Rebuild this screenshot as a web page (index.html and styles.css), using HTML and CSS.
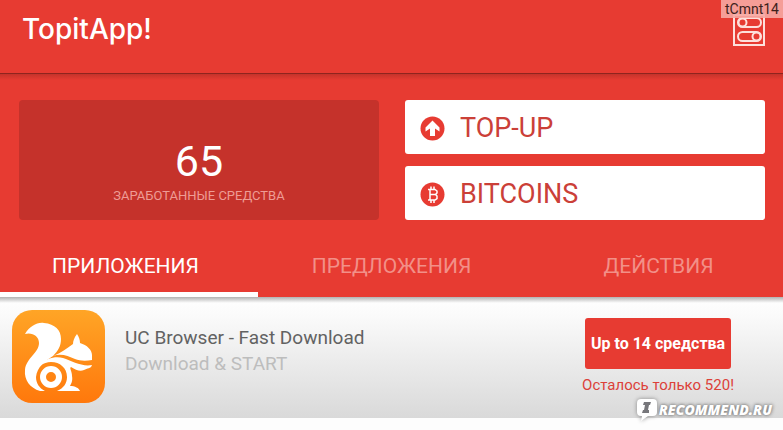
FILE: index.html
```html
<!DOCTYPE html>
<html lang="ru">
<head>
    <meta charset="UTF-8">
    <meta name="viewport" content="width=device-width, initial-scale=1.0">
    <title>TopitApp!</title>
    <link rel="stylesheet" href="styles.css">
</head>
<body>
    <header class="topbar">
        <h1>TopitApp!</h1>
        <button type="button" class="settings-btn" aria-label="Настройки">
            <svg width="32" height="32" viewBox="0 0 32 32" fill="none" stroke="#fde0dc" stroke-width="2">
                <rect x="1" y="1" width="30" height="30"/>
                <rect x="5" y="4" width="23" height="9" rx="4.5"/>
                <circle cx="9.5" cy="8.5" r="4"/>
                <rect x="5" y="18" width="23" height="9" rx="4.5"/>
                <circle cx="23.5" cy="22.5" r="4"/>
            </svg>
        </button>
        <span class="user-tag">tCmnt14</span>
    </header>

    <section class="summary">
        <div class="balance">
            <strong class="balance-value">65</strong>
            <span class="balance-label">ЗАРАБОТАННЫЕ СРЕДСТВА</span>
        </div>
        <div class="payouts">
            <button type="button" class="payout-btn">
                <svg width="25" height="25" viewBox="0 0 25 25">
                    <circle cx="12.5" cy="12.5" r="12" fill="#e73b32"/>
                    <path d="M12.5 4.5 L19.5 11.5 V15.5 L15 12.5 V20 H10 V12.5 L5.5 15.5 V11.5 Z" fill="#fff"/>
                </svg>
                TOP-UP
            </button>
            <button type="button" class="payout-btn">
                <svg width="25" height="25" viewBox="0 0 25 25">
                    <circle cx="12.5" cy="12.5" r="12" fill="#e73b32"/>
                    <path d="M8 7.5 H15 L17 9 V11 L15.5 12.5 L17 14 V16.5 L15 18 H8 M10 7.5 V18 M10 12.5 H15.5 M11 4.5 V7.5 M14 4.5 V7.5 M11 18 V21 M14 18 V21" fill="none" stroke="#fff" stroke-width="1.5"/>
                </svg>
                BITCOINS
            </button>
        </div>
    </section>

    <nav class="tabs">
        <a href="#apps" class="tab active">ПРИЛОЖЕНИЯ</a>
        <a href="#offers" class="tab">ПРЕДЛОЖЕНИЯ</a>
        <a href="#actions" class="tab">ДЕЙСТВИЯ</a>
    </nav>

    <main id="apps">
        <article class="app-row">
            <svg class="app-icon" width="93" height="93" viewBox="0 0 93 93">
                <defs>
                    <linearGradient id="orange" x1="0" y1="0" x2="0" y2="1">
                        <stop offset="0" stop-color="#ffa526"/>
                        <stop offset="1" stop-color="#ff780c"/>
                    </linearGradient>
                </defs>
                <rect width="93" height="93" rx="20" fill="url(#orange)"/>
                <!-- tail -->
                <path d="M13 24 C18 16 25 12 32 13 C43 14 49 20 49 29 C49 36 46 41 41 46 C33 51 25 57 24 67 C24 73 27 78 33 81 L28 81 C18 78 12 70 13 60 C14 48 27 43 27 33 C27 26 20 22 13 24 Z" fill="#fff"/>
                <!-- head -->
                <path d="M41 46 C49 43 55 38 61 34 C61 31 62 28 65 24 C67 27 68 30 68 33 C75 35 80 40 80 45 L80 50 C74 51 68 51 63 49 C56 46 49 43 41 46 Z" fill="#fff"/>
                <!-- body -->
                <path d="M29 54 C34 48 44 46 51 48 C60 51 70 57 80 55 C79 59 75 58 72 60 C68 62 64 60 59 57 C57 58 60 61 60 66 C61 71 59 74 58 76 C63 76 67 78 68 81 L45 81 C52 78 55 73 55 67 C55 58 48 52 39 52 C35 52 32 53 28 56 Z" fill="#fff"/>
                <!-- wheel -->
                <circle cx="39" cy="67" r="8" fill="none" stroke="#fff" stroke-width="6"/>
            </svg>
            <div class="app-info">
                <h2>UC Browser - Fast Download</h2>
                <p>Download &amp; START</p>
            </div>
            <div class="app-reward">
                <button type="button" class="reward-btn">Up to 14 средства</button>
                <span class="reward-left">Осталось только 520!</span>
            </div>
        </article>
    </main>

    <div class="watermark">
        <svg width="24" height="26" viewBox="0 0 24 26">
            <path d="M6 2 H18 Q22 2 22 6 V15 Q22 19 18 19 H13 L6 24 L7 19 H6 Q2 19 2 15 V6 Q2 2 6 2 Z" fill="#fff"/>
            <path d="M9 5 H16 L15 8 H14 L13 13 H14 L14 16 H7 L8 13 H9 L10 8 H8 Z" fill="#77777b"/>
        </svg>
        <span>RECOMMEND.RU</span>
    </div>
</body>
</html>
```
FILE: styles.css
```css
/* Basic styling */
* {
    box-sizing: border-box;
}
body {
    font-family: Roboto, "Noto Sans", sans-serif;
    margin: 0;
    background-color: #fdfdfd;
}
h1, h2, p {
    margin: 0;
    font-weight: 400;
}
button {
    border: none;
    padding: 0;
    font-family: inherit;
    cursor: pointer;
}
/* Top bar */
.topbar {
    position: relative;
    display: flex;
    justify-content: space-between;
    align-items: flex-start;
    height: 74px;
    padding: 14px 18px 0 22px;
    background-color: #e73b32;
    border-bottom: 1px solid #8f241e;
}
.topbar h1 {
    font-family: Inter, sans-serif;
    font-size: 28px;
    font-weight: 500;
    line-height: 30px;
    color: #fff;
}
.settings-btn {
    background: none;
}
.settings-btn svg {
    display: block;
}
.user-tag {
    position: absolute;
    top: 0;
    right: 0;
    padding: 0 4px;
    background-color: rgba(246, 168, 162, 0.9);
    color: #3c1f1c;
    font-size: 14px;
    line-height: 18px;
}
/* Balance and payouts */
.summary {
    display: grid;
    grid-template-columns: 1fr 1fr;
    gap: 26px;
    padding: 26px 18px 18px 19px;
    background: linear-gradient(#c5332b, #e73b32 6px);
}
.balance {
    display: flex;
    flex-direction: column;
    align-items: center;
    padding-top: 35px;
    border-radius: 4px;
    background-color: #c5322b;
}
.balance-value {
    font-size: 43px;
    font-weight: 400;
    line-height: 52px;
    color: #fff;
}
.balance-label {
    font-size: 13px;
    line-height: 18px;
    color: #ee9c95;
}
.payouts {
    display: grid;
    gap: 12px;
}
.payout-btn {
    display: flex;
    align-items: center;
    gap: 15px;
    height: 54px;
    padding: 2px 15px 0;
    border-radius: 3px;
    background-color: #fff;
    color: #cb4038;
    font-size: 27px;
    font-weight: 400;
}
/* Tabs */
.tabs {
    display: grid;
    grid-template-columns: 258fr 267fr 258fr;
    background-color: #e73b32;
}
.tab {
    padding: 14px 0 12px;
    border-bottom: 5px solid transparent;
    color: #f29088;
    font-size: 21px;
    font-weight: 400;
    line-height: 28px;
    text-align: center;
    text-decoration: none;
}
.tab:first-child {
    padding-right: 7px;
}
.tab:last-child {
    padding-left: 9px;
}
.tab.active {
    border-color: #fff;
    color: #fff;
}
/* App list */
.app-row {
    display: flex;
    align-items: flex-start;
    gap: 20px;
    padding: 13px 49px 15px 12px;
    background: linear-gradient(rgba(0, 0, 0, 0.3), rgba(0, 0, 0, 0) 6px), linear-gradient(#fff, #fafafa 20px, #d9d9d9);
}
.app-icon {
    flex: none;
}
.app-info {
    flex: 1;
    padding-top: 15px;
    font-size: 19px;
    line-height: 26px;
    color: #bdbdbd;
}
.app-info h2 {
    font-size: 19px;
    color: #626262;
}
.app-reward {
    display: flex;
    flex-direction: column;
    align-items: center;
    padding-top: 8px;
}
.reward-btn {
    height: 51px;
    padding: 0 6px;
    border-radius: 3px;
    background-color: #e73b32;
    color: #fff;
    font-size: 16px;
    font-weight: 700;
}
.reward-left {
    margin-top: 6px;
    font-size: 15px;
    line-height: 20px;
    color: #dc4139;
}
/* Watermark over the page corner */
.watermark {
    position: absolute;
    right: 11px;
    bottom: 7px;
    display: flex;
    align-items: center;
    color: #fff;
    font-family: "Open Sans", sans-serif;
    font-size: 14px;
    font-style: italic;
    font-weight: 800;
    line-height: 20px;
    text-shadow: 0 0 3px #777, 0 0 4px #888;
}
.watermark svg {
    filter: drop-shadow(0 0 2px #888);
}
```
